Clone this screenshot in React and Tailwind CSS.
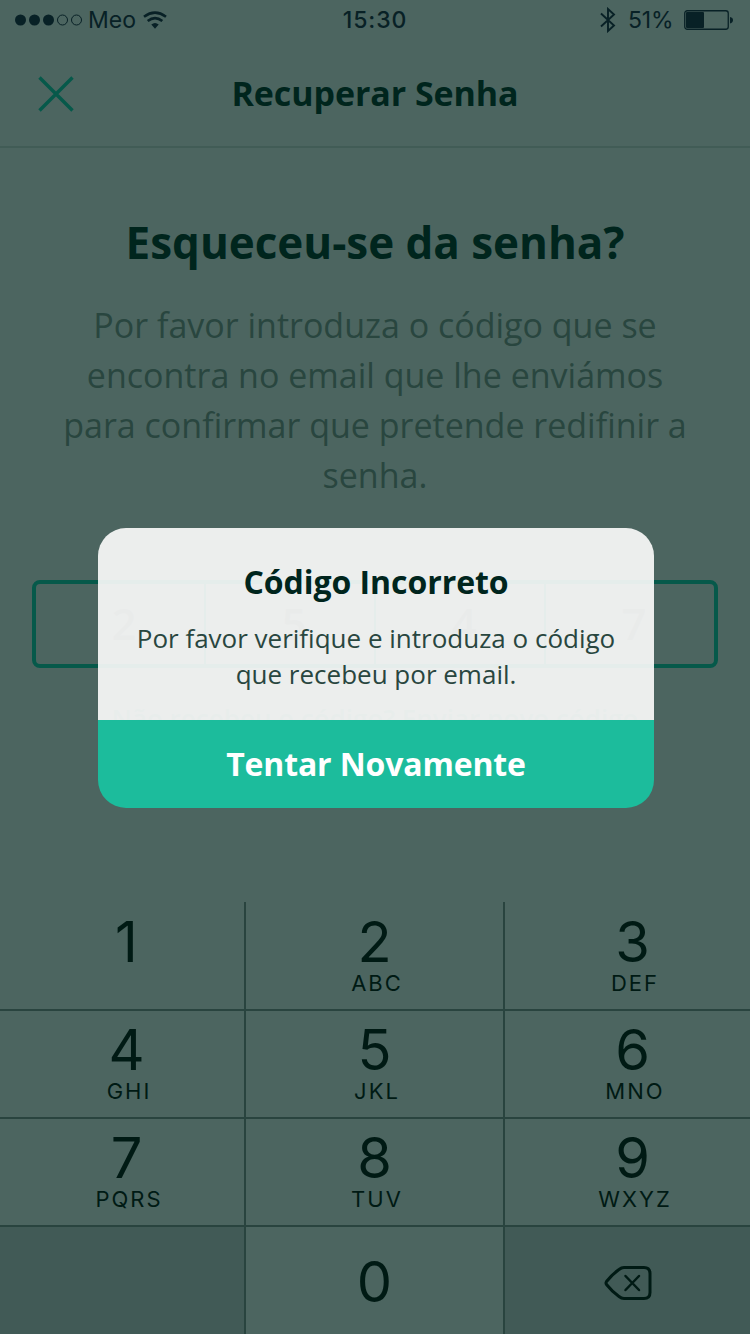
const KEYS = [
  ["1", ""], ["2", "ABC"], ["3", "DEF"],
  ["4", "GHI"], ["5", "JKL"], ["6", "MNO"],
  ["7", "PQRS"], ["8", "TUV"], ["9", "WXYZ"],
];

function StatusBar() {
  return (
    <div className="grid h-10 grid-cols-3 items-center pl-[15px] pr-4 font-['Inter',sans-serif] text-[23px] text-[#082126]">
      <div className="flex items-center">
        <svg width="68" height="12" viewBox="0 0 68 12" fill="currentColor">
          <circle cx="5.5" cy="6" r="5.5" />
          <circle cx="19.5" cy="6" r="5.5" />
          <circle cx="33.5" cy="6" r="5.5" />
          <circle cx="47.5" cy="6" r="5" fill="none" stroke="currentColor" />
          <circle cx="61.5" cy="6" r="5" fill="none" stroke="currentColor" />
        </svg>
        <span className="ml-[5px] w-[50px] whitespace-nowrap">Meo</span>
        <svg className="ml-[5px]" width="24" height="18" viewBox="0 0 24 18" fill="none" stroke="currentColor" strokeWidth="2.6">
          <path d="M1 5.7Q12-2.3 23 5.7" />
          <path d="M4.7 10Q12 4.2 19.3 10" />
          <path d="M8.3 13.6Q12 10.5 15.7 13.6L12 17.7Z" fill="currentColor" stroke="none" />
        </svg>
      </div>
      <span className="pl-px text-center font-medium tracking-[0.9px]">15:30</span>
      <div className="flex items-center justify-end">
        <svg width="16" height="26" viewBox="0 0 16 26" fill="none" stroke="currentColor" strokeWidth="1.9">
          <path d="M1 6.5L14 18.5L8 24V2L14 7.5L1 19.5" />
        </svg>
        <span className="ml-3 w-[44px] whitespace-nowrap tracking-[-0.2px]">51%</span>
        <svg className="ml-3" width="50" height="20" viewBox="0 0 50 20">
          <rect x=".75" y=".75" width="43.5" height="18.5" rx="2.5" fill="none" stroke="currentColor" strokeWidth="1.3" />
          <rect x="2" y="2" width="18" height="16" rx="1" fill="currentColor" />
          <path d="M46 7Q49 7.5 49 10T46 13.5Z" fill="currentColor" />
        </svg>
      </div>
    </div>
  );
}

function Header() {
  return (
    <header className="grid h-[108px] grid-cols-[112px_1fr_112px] items-center border-b-2 border-[#415c56]">
      <svg className="ml-[38px] mt-0.5" width="36" height="36" viewBox="0 0 36 36" stroke="#06594a" strokeWidth="3.4">
        <path d="M1.5 1.5L34.5 34.5M34.5 1.5L1.5 34.5" />
      </svg>
      <h1 className="text-center text-[34px] font-bold leading-[46px] tracking-[-0.08px] text-[#00251d]">Recuperar Senha</h1>
    </header>
  );
}

function CodeInput() {
  return (
    <div className="mx-8 flex h-[88px] rounded-lg border-4 border-[#06594a]">
      {["2", "5", "4", "7"].map((d, i) => (
        <div key={d} className={`flex flex-1 items-center justify-center pl-2 pb-0.5 text-[44px] font-semibold text-[#2f4a44] ${i < 3 ? "border-r-2 border-r-[#06594a]" : ""}`}>
          {d}
        </div>
      ))}
    </div>
  );
}

function Keypad() {
  return (
    <div className="grid h-[432px] grid-cols-[244px_257px_245px] grid-rows-[107px_106px_106px_107px] gap-0.5 bg-[#29443f] font-['Inter',sans-serif] text-[#001a14]">
      {KEYS.map(([digit, letters], i) => (
        <button key={digit} className={`flex flex-col items-center bg-[#4c6560] ${i < 3 ? "pt-3" : "pt-[11px]"} ${i % 3 === 0 ? "pl-[9px]" : i % 3 === 2 ? "pl-[10px]" : ""}`}>
          <span className="text-[56px] leading-[56px]">{digit}</span>
          <span className="pl-[5px] text-[22px] leading-[26px] tracking-[2px]">{letters}</span>
        </button>
      ))}
      <div className="bg-[#415a56]" />
      <button className="flex justify-center bg-[#4c6560] pt-[27px] text-[56px] leading-[56px]">0</button>
      <button className="flex items-start bg-[#415a56] pl-[99px] pt-[38px]">
        <svg width="48" height="36" viewBox="0 0 48 36" fill="none" stroke="currentColor" strokeWidth="3" strokeLinecap="round" strokeLinejoin="round">
          <path d="M20 2.5H40Q46 2.5 46 8.500V27.500Q46 33.500 40 33.500H20Q17.500 33.500 15 31.500Q8 26.500 2.500 19.500Q1.500 18 2.500 16.500Q8 9.500 15 4.500Q17.500 2.500 20 2.500Z" />
          <path d="M21.500 11L35 25M35 11L21.500 25" strokeWidth="2.5" />
        </svg>
      </button>
    </div>
  );
}

function Dialog() {
  return (
    <div role="dialog" className="absolute left-[98px] top-[528px] flex h-[280px] w-[556px] flex-col overflow-hidden rounded-[28px] text-center">
      <div className="flex h-48 flex-col items-center bg-[#fefdfd]/90 pt-8">
        <h3 className="text-[32px] font-bold leading-[44px] tracking-[-0.05px] text-[#00251d]">Código Incorreto</h3>
        <p className="mt-4 whitespace-nowrap text-[26px] leading-9 text-[#29463f]">
          Por favor verifique e introduza o código<br />que recebeu por email.
        </p>
      </div>
      <button className="h-[88px] bg-[#1cbc9c] text-[32px] font-bold tracking-[-0.15px] text-white">Tentar Novamente</button>
    </div>
  );
}

export default function App() {
  return (
    <div className="relative flex h-[1334px] w-[750px] flex-col overflow-hidden bg-[#4c6560] font-['Open_Sans',sans-serif]">
      <StatusBar />
      <Header />
      <main className="flex flex-1 flex-col">
        <h2 className="mt-[64px] text-center text-[44px] font-bold leading-[60px] tracking-[-0.03px] text-[#00251d]">Esqueceu-se da senha?</h2>
        <p className="mt-[28px] h-[200px] whitespace-nowrap text-center text-[34px] leading-[50px] text-[#29463f]">
          Por favor introduza o código que se<br />encontra no email que lhe enviámos<br />para confirmar que pretende redifinir a<br />senha.
        </p>
        <div className="mt-20"><CodeInput /></div>
        <p className="mt-[32px] text-center text-[26px] font-semibold leading-9 text-[#1f5a4e]">Não recebeu o código? Enviar novo código</p>
      </main>
      <Keypad />
      <Dialog />
    </div>
  );
}
